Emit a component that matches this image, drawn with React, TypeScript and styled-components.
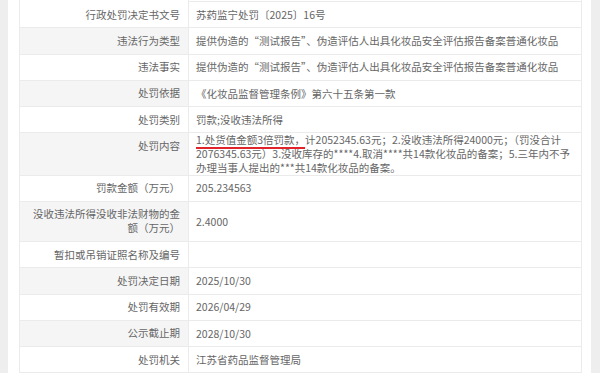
import styled, { createGlobalStyle } from "styled-components";

type row = {
    label: string;
    value: React.ReactNode;
};

const GlobalStyle = createGlobalStyle`
    html, body {
        margin: 0;
        padding: 0;
        background: #ffffff;
        overflow: hidden;
    }
    body {
        font-family: "Noto Sans CJK SC", "Liberation Sans", sans-serif;
        font-size: 10.5px;
        color: #666666;
    }
`;

const Page = styled.div`
    display: flex;
    width: 600px;
    height: 373px;
    overflow: hidden;
`;

const Gutter = styled.div`
    width: 8px;
    margin-right: 11px;
    flex: none;
    background: #eeeeee;
`;

const Sheet = styled.div`
    width: 563px;
    flex: none;
    border-left: 1px solid #ebebeb;
    border-right: 1px solid #ebebeb;
    box-sizing: border-box;
`;

const Row = styled.div`
    display: grid;
    grid-template-columns: 169px 1fr;
    border-top: 1px solid #ebebeb;
`;

const CutRow = styled(Row)`
    height: 1px;
    border-top: none;
`;

const Label = styled.div<{ $shaded: boolean }>`
    background: ${(p) => (p.$shaded ? "#f5f5f5" : "#ffffff")};
    border-right: 1px solid #ebebeb;
    padding: 5.625px 8px;
    line-height: 14px;
    text-align: right;
    min-height: 14px;
`;

const Value = styled.div`
    align-self: center;
    padding: 0 8px 0 7px;
    line-height: 13.75px;
`;

const Marked = styled.span`
    text-decoration: underline;
    text-decoration-color: #e0242a;
    text-decoration-thickness: 1.5px;
    text-underline-offset: 2.5px;
`;

const Scrollbar = styled.div`
    width: 9px;
    margin-left: auto;
    flex: none;
    background: #eeeeee;
`;

const rows: row[] = [
    { label: "行政处罚决定书文号", value: "苏药监宁处罚〔2025〕16号" },
    {
        label: "违法行为类型",
        value: "提供伪造的“测试报告”、伪造评估人出具化妆品安全评估报告备案普通化妆品",
    },
    {
        label: "违法事实",
        value: "提供伪造的“测试报告”、伪造评估人出具化妆品安全评估报告备案普通化妆品",
    },
    { label: "处罚依据", value: "《化妆品监督管理条例》第六十五条第一款" },
    { label: "处罚类别", value: "罚款;没收违法所得" },
    {
        label: "处罚内容",
        value: (
            <>
                <Marked>1.处货值金额3倍罚款，</Marked>
                计2052345.63元；2.没收违法所得24000元；（罚没合计2076345.63元）3.没收库存的****4.取消****共14款化妆品的备案；5.三年内不予办理当事人提出的***共14款化妆品的备案。
            </>
        ),
    },
    { label: "罚款金额（万元）", value: "205.234563" },
    { label: "没收违法所得没收非法财物的金额（万元）", value: "2.4000" },
    { label: "暂扣或吊销证照名称及编号", value: "" },
    { label: "处罚决定日期", value: "2025/10/30" },
    { label: "处罚有效期", value: "2026/04/29" },
    { label: "公示截止期", value: "2028/10/30" },
    { label: "处罚机关", value: "江苏省药品监督管理局" },
    { label: "", value: "" },
];

function App() {
    return (
        <>
            <GlobalStyle />
            <Page>
                <Gutter />
                <Sheet>
                    <CutRow>
                        <Label $shaded={false} />
                        <Value />
                    </CutRow>
                    {rows.map((r, i) => (
                        <Row key={i}>
                            <Label $shaded={i % 2 === 1}>{r.label}</Label>
                            <Value>{r.value}</Value>
                        </Row>
                    ))}
                </Sheet>
                <Scrollbar />
            </Page>
        </>
    );
}

export default App;
